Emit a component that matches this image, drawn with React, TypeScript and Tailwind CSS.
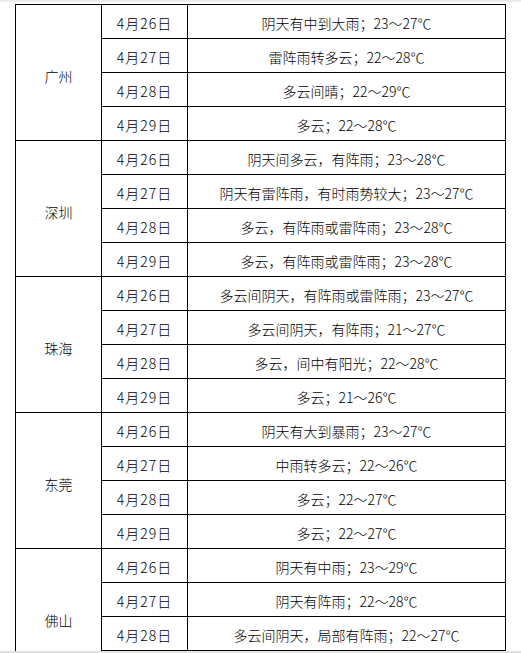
import React from "react";

type City = { name: string; rows: [string, string][] };

const data: City[] = [
  {
    name: "广州",
    rows: [
      ["4月26日", "阴天有中到大雨；23～27℃"],
      ["4月27日", "雷阵雨转多云；22～28℃"],
      ["4月28日", "多云间晴；22～29℃"],
      ["4月29日", "多云；22～28℃"],
    ],
  },
  {
    name: "深圳",
    rows: [
      ["4月26日", "阴天间多云，有阵雨；23～28℃"],
      ["4月27日", "阴天有雷阵雨，有时雨势较大；23～27℃"],
      ["4月28日", "多云，有阵雨或雷阵雨；23～28℃"],
      ["4月29日", "多云，有阵雨或雷阵雨；23～28℃"],
    ],
  },
  {
    name: "珠海",
    rows: [
      ["4月26日", "多云间阴天，有阵雨或雷阵雨；23～27℃"],
      ["4月27日", "多云间阴天，有阵雨；21～27℃"],
      ["4月28日", "多云，间中有阳光；22～28℃"],
      ["4月29日", "多云；21～26℃"],
    ],
  },
  {
    name: "东莞",
    rows: [
      ["4月26日", "阴天有大到暴雨；23～27℃"],
      ["4月27日", "中雨转多云；22～26℃"],
      ["4月28日", "多云；22～27℃"],
      ["4月29日", "多云；22～27℃"],
    ],
  },
  {
    name: "佛山",
    rows: [
      ["4月26日", "阴天有中雨；23～29℃"],
      ["4月27日", "阴天有阵雨；22～28℃"],
      ["4月28日", "多云间阴天，局部有阵雨；22～27℃"],
      ["", ""],
    ],
  },
];

export default function App() {
  return (
    <div
      className="relative h-[653px] w-[521px] overflow-hidden bg-white text-black"
      style={{ fontFamily: '"SimSun", "Noto Sans CJK SC", "Liberation Serif", sans-serif' }}
    >
      <div className="h-[2px] bg-[#ececec]" />
      <div className="pl-[15px] pt-[2px]">
        <table className="table-fixed border-collapse text-[14px] font-light leading-none">
          <colgroup>
            <col className="w-[86px]" />
            <col className="w-[86px]" />
            <col className="w-[318px]" />
          </colgroup>
          <tbody>
            {data.map((city) =>
              city.rows.map((r, i) => (
                <tr key={city.name + i} className="h-[34px]">
                  {i === 0 && (
                    <td
                      rowSpan={4}
                      className="border border-black p-0 text-center align-middle"
                    >
                      <span className="relative top-[3px]">{city.name}</span>
                    </td>
                  )}
                  <td className="border border-black p-0 text-center align-middle">
                    <span className="relative top-[1px] tracking-[1px]">{r[0]}</span>
                  </td>
                  <td className="border border-black p-0 text-center align-middle">
                    <span className="relative top-[1px]">{r[1]}</span>
                  </td>
                </tr>
              ))
            )}
          </tbody>
        </table>
      </div>
      <div className="absolute bottom-0 left-0 h-[2px] w-full bg-[#e2e2e2]" />
    </div>
  );
}
